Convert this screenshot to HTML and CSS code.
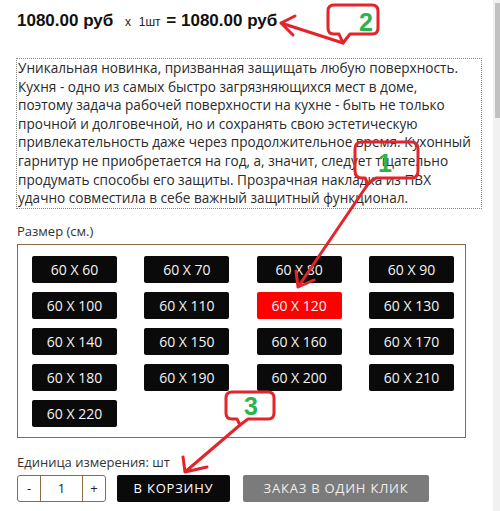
FILE: index.html
```html
<!DOCTYPE html>
<html lang="ru">
<head>
    <meta charset="UTF-8">
    <meta name="viewport" content="width=device-width, initial-scale=1.0">
    <title>Накладка на столешницу</title>
    <link rel="stylesheet" href="styles.css">
</head>
<body>
    <div class="page">
        <div class="product">
            <h2 class="price-line">
                <span class="price">1080.00 руб</span>
                <span class="mult">x</span>
                <span class="qty-note">1шт</span>
                <span class="eq">=</span>
                <span class="price">1080.00 руб</span>
            </h2>

            <p class="description">Уникальная новинка, призванная защищать любую поверхность.<br>Кухня - одно из самых быстро загрязняющихся мест в доме,<br>поэтому задача рабочей поверхности на кухне - быть не только<br>прочной и долговечной, но и сохранять свою эстетическую<br>привлекательность даже через продолжительное время. Кухонный<br>гарнитур не приобретается на год, а, значит, следует тщательно<br>продумать способы его защиты. Прозрачная накладка из ПВХ<br>удачно совместила в себе важный защитный функционал.</p>

            <div class="label">Размер (см.)</div>
            <div class="sizes">
                <span class="size">60 X 60</span>
                <span class="size">60 X 70</span>
                <span class="size">60 X 80</span>
                <span class="size">60 X 90</span>
                <span class="size">60 X 100</span>
                <span class="size">60 X 110</span>
                <span class="size active">60 X 120</span>
                <span class="size">60 X 130</span>
                <span class="size">60 X 140</span>
                <span class="size">60 X 150</span>
                <span class="size">60 X 160</span>
                <span class="size">60 X 170</span>
                <span class="size">60 X 180</span>
                <span class="size">60 X 190</span>
                <span class="size">60 X 200</span>
                <span class="size">60 X 210</span>
                <span class="size">60 X 220</span>
            </div>

            <div class="label unit">Единица измерения: шт</div>
            <div class="buy">
                <div class="counter">
                    <span class="step">-</span>
                    <span class="count">1</span>
                    <span class="step">+</span>
                </div>
                <span class="btn cart">В КОРЗИНУ</span>
                <span class="btn one-click">ЗАКАЗ В ОДИН КЛИК</span>
            </div>
        </div>
        <div class="scrollbar"><div class="thumb"></div></div>
    </div>

    <!-- пометки поверх страницы -->
    <svg class="marks" width="500" height="511" viewBox="0 0 500 511">
        <g fill="none" stroke="#e3242b" stroke-width="3" stroke-linecap="round" stroke-linejoin="round">
            <path d="M334 5 H372 Q378 5 378 11 V28 Q378 34 372 34 H350 L343 43 L339 34 H334 Q328 34 328 28 V11 Q328 5 334 5 Z"/>
            <path d="M343 43 L281 23 M281 23 L295 16 M281 23 L293 35"/>

            <path d="M362 142 H411 Q418 142 418 149 V171 Q418 178 411 178 H376 L368 184 L365 178 H362 Q355 178 355 171 V149 Q355 142 362 142 Z"/>
            <path d="M368 184 L298 287 M298 287 L296 271 M298 287 L314 280"/>

            <path d="M232 392 H268 Q274 392 274 398 V413 Q274 419 268 419 H248 L240 425 L237 419 H232 Q226 419 226 413 V398 Q226 392 232 392 Z"/>
            <path d="M240 425 L185 472 M185 472 L183 457 M185 472 L207 467"/>
        </g>
        <g class="mark-num" fill="#2eb24b">
            <text x="359" y="31">2</text>
            <text x="378" y="172">1</text>
            <text x="244" y="415">3</text>
        </g>
    </svg>
</body>
</html>
```

FILE: styles.css
```css
body{
    margin: 0;
    padding: 0;
    background-color: white;
    color: #333;
    font-family: "Open Sans", "Noto Sans", sans-serif;
}
.page{
    display: flex;
    min-height: 511px;
}
.product{
    flex: 1;
    padding: 9px 0 0 16px;
}

/* строка цены */
.price-line{
    margin: 0 0 24px 1px;
    font-family: "Liberation Sans", Arial, sans-serif;
    font-weight: bold;
    font-size: 17px;
    line-height: 24px;
    color: #111;
}
.mult, .qty-note{
    font-weight: normal;
    font-size: 12px;
    color: #222;
}
.mult{
    margin: 0 3px 0 7px;
}
.eq{
    margin-left: 1px;
}

.description{
    width: 463px;
    margin: 0;
    padding: 0 0 0 1px;
    border: 1px dotted #888;
    font-size: 13.6px;
    line-height: 18.6px;
    color: #2a2a2a;
    white-space: nowrap;
}

.label{
    margin: 12px 0 0 1px;
    font-size: 13px;
    line-height: 20px;
    color: #333;
}

.sizes{
    width: 422px;
    margin: 3px 0 0 1px;
    padding: 11px 11px 10px 14px;
    border: 1px solid #8b6b43;
    display: grid;
    grid-template-columns: repeat(4, 85px);
    justify-content: space-between;
    row-gap: 9px;
}
.size{
    height: 27px;
    line-height: 27px;
    background-color: #0a0a0a;
    color: #f4f4f4;
    border-radius: 2px;
    text-align: center;
    font-size: 14px;
}
.size.active{
    background-color: #ff0000;
}

.unit{
    margin-top: 14px;
}

.buy{
    display: flex;
    margin: 3px 0 0 1px;
}
.counter{
    display: flex;
    height: 25px;
    border: 1px solid #8b6b43;
    border-radius: 3px;
    font-size: 13px;
    line-height: 25px;
    color: #222;
}
.step{
    width: 22px;
    text-align: center;
}
.count{
    width: 41px;
    text-align: center;
    border-left: 1px solid #8b6b43;
    border-right: 1px solid #8b6b43;
}
.btn{
    height: 27px;
    line-height: 27px;
    font-size: 13px;
    letter-spacing: 0.8px;
    text-align: center;
    border-radius: 2px;
}
.cart{
    width: 113px;
    margin-left: 11px;
    background-color: #0a0a0a;
    color: #fff;
}
.one-click{
    width: 186px;
    margin-left: 13px;
    background-color: #7b7b7b;
    color: #eee;
}

/* полоса прокрутки справа */
.scrollbar{
    width: 7px;
    background-color: #f1f1f1;
    padding: 3px 0 0 2px;
    box-sizing: border-box;
}
.thumb{
    height: 115px;
    background-color: #c1c1c1;
}

.marks{
    position: absolute;
    top: 0;
    left: 0;
    pointer-events: none;
}
.mark-num text{
    font-family: "Liberation Sans", Arial, sans-serif;
    font-weight: bold;
    font-size: 25px;
}
```
